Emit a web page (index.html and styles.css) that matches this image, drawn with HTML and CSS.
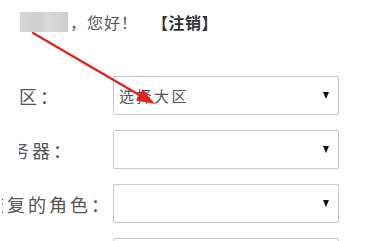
FILE: index.html
```html
<!DOCTYPE html>
<html lang="zh">
<head>
<meta charset="utf-8">
<link rel="stylesheet" href="styles.css">
</head>
<body>
<div class="page">
  <div class="header">
    <span class="blur"></span>
    <span class="greet">，您好！</span>
    <span class="logout">【注销】</span>
  </div>
  <div class="form">
    <div class="label label-zone"><span class="label-text">游戏大区：</span></div>
    <div class="select"><span class="value">选择大区</span><span class="caret"></span></div>
    <div class="label label-server"><span class="label-text">游戏服务器：</span></div>
    <div class="select"><span class="value"></span><span class="caret"></span></div>
    <div class="label label-role"><span class="label-text">需要恢复的角色：</span></div>
    <div class="select"><span class="value"></span><span class="caret"></span></div>
    <div class="label"></div>
    <div class="select"><span class="value"></span></div>
  </div>
  <svg class="arrow" width="374" height="241" viewBox="0 0 374 241">
    <line x1="33" y1="33" x2="141" y2="96" stroke="#e3201c" stroke-width="2.2" stroke-linecap="round"/>
    <polygon points="155,104 136,100.5 142.5,89.5" fill="#e3201c"/>
  </svg>
</div>
</body>
</html>
```
FILE: styles.css
```css
html, body {
  margin: 0;
  padding: 0;
  background: #ffffff;
  overflow: hidden;
}
body {
  width: 374px;
  height: 241px;
  font-family: "Noto Sans CJK SC", "Noto Sans", sans-serif;
  color: #444;
}
.page {
  position: relative;
  width: 374px;
  height: 241px;
  overflow: hidden;
}
.header {
  display: flex;
  align-items: center;
  padding: 12px 0 0 20px;
  height: 20px;
}
.blur {
  width: 48px;
  height: 20px;
  background: linear-gradient(90deg, #d6d6d6 0%, #cfcfcf 40%, #dadada 55%, #cdcdcd 100%);
  filter: blur(0.6px);
}
.greet {
  font-size: 16px;
  letter-spacing: 1px;
  color: #555;
  margin-left: 2px;
}
.logout {
  font-size: 16px;
  font-weight: bold;
  color: #333;
  letter-spacing: 0.5px;
  margin-left: 14px;
}
.form {
  display: grid;
  grid-template-columns: 113px 226px;
  grid-auto-rows: 39px;
  row-gap: 15px;
  margin-top: 44px;
}
.label {
  display: flex;
  align-items: center;
  overflow: hidden;
  white-space: nowrap;
  font-size: 18px;
  letter-spacing: 3px;
  color: #555;
}
.label-text {
  flex: none;
}
.label-zone {
  margin-left: 18px;
}
.label-zone .label-text {
  margin-left: -62px;
}
.label-server {
  margin-left: 19px;
}
.label-server .label-text {
  margin-left: -71px;
}
.label-role {
  margin-left: 2px;
}
.label-role .label-text {
  margin-left: -58px;
}
.select {
  display: flex;
  align-items: center;
  justify-content: space-between;
  border: 1px solid #c8c8c8;
  border-radius: 2px;
  box-shadow: 0 0 1px rgba(0,0,0,0.12);
  padding: 0 9px 0 5px;
  box-sizing: border-box;
}
.value {
  font-size: 15px;
  letter-spacing: 2.5px;
  color: #555;
}
.caret {
  width: 0;
  height: 0;
  border-left: 3.5px solid transparent;
  border-right: 3.5px solid transparent;
  border-top: 7px solid #111;
}
.arrow {
  position: absolute;
  left: 0;
  top: 0;
  pointer-events: none;
}
```
